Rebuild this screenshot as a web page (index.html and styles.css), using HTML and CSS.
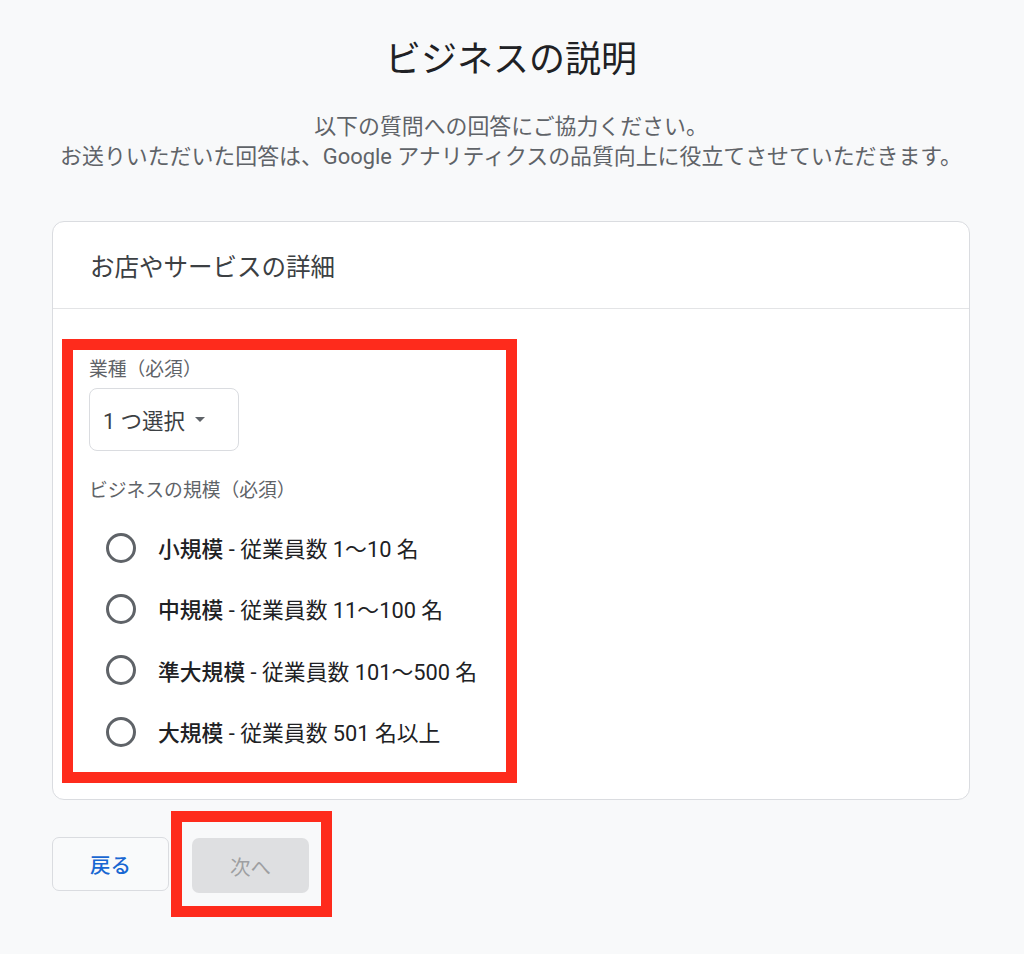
FILE: index.html
```html
<!DOCTYPE html>
<html lang="ja">
<head>
<meta charset="utf-8">
<title>ビジネスの説明</title>
<link rel="stylesheet" href="styles.css">
</head>
<body>
<main class="page">
  <h1 class="title">ビジネスの説明</h1>
  <p class="subtitle">以下の質問への回答にご協力ください。<br>お送りいただいた回答は、Google アナリティクスの品質向上に役立てさせていただきます。</p>

  <section class="card">
    <div class="card-header">お店やサービスの詳細</div>
    <div class="card-body">
      <div class="highlight">
        <div class="field-label">業種（必須）</div>
        <div class="select">1 つ選択<span class="caret"></span></div>
        <div class="field-label second">ビジネスの規模（必須）</div>
        <ul class="radios">
          <li class="radio-row"><span class="radio"></span><span class="radio-text"><span class="em">小規模</span> - 従業員数 1〜10 名</span></li>
          <li class="radio-row"><span class="radio"></span><span class="radio-text"><span class="em">中規模</span> - 従業員数 11〜100 名</span></li>
          <li class="radio-row"><span class="radio"></span><span class="radio-text"><span class="em">準大規模</span> - 従業員数 101〜500 名</span></li>
          <li class="radio-row"><span class="radio"></span><span class="radio-text"><span class="em">大規模</span> - 従業員数 501 名以上</span></li>
        </ul>
      </div>
    </div>
  </section>

  <div class="actions">
    <button class="btn back">戻る</button>
    <div class="highlight-btn">
      <button class="btn next" disabled>次へ</button>
    </div>
  </div>
</main>
</body>
</html>
```

FILE: styles.css
```css
html, body {
  margin: 0;
  padding: 0;
}
body {
  background: #f8f9fa;
  font-family: Roboto, "Noto Sans CJK JP", "Noto Sans", sans-serif;
  color: #202124;
}
.page {
  width: 918px;
  margin-left: 52px;
  padding-top: 38px;
}
.title {
  margin: 0;
  font-size: 36px;
  line-height: 44px;
  font-weight: 400;
  text-align: center;
  color: #202124;
}
.subtitle {
  margin: 30px 0 0;
  font-size: 21.9px;
  line-height: 30px;
  text-align: center;
  color: #5f6368;
}
.card {
  margin-top: 49px;
  background: #fff;
  border: 1px solid #dadce0;
  border-radius: 12px;
}
.card-header {
  height: 87px;
  box-sizing: border-box;
  padding-left: 37px;
  display: flex;
  align-items: center;
  font-size: 24.5px;
  color: #3c4043;
  border-bottom: 1px solid #e3e4e6;
}
.card-body {
  padding: 30px 0 16px 9px;
}
.highlight {
  width: 455px;
  box-sizing: border-box;
  border: 11px solid #fe2b1c;
  padding: 8px 0 10px 16px;
}
.field-label {
  font-size: 18.8px;
  line-height: 24px;
  color: #5f6368;
}
.field-label.second {
  margin-top: 28px;
}
.select {
  margin-top: 6px;
  width: 150px;
  height: 63px;
  box-sizing: border-box;
  border: 1px solid #dadce0;
  border-radius: 8px;
  padding-left: 13px;
  display: flex;
  align-items: center;
  font-size: 21.5px;
  color: #3c4043;
}
.caret {
  margin-left: 10px;
  width: 0;
  height: 0;
  border-left: 5px solid transparent;
  border-right: 5px solid transparent;
  border-top: 5px solid #5f6368;
}
.radios {
  list-style: none;
  margin: 14px 0 0;
  padding: 0;
}
.radio-row {
  height: 61.3px;
  display: flex;
  align-items: center;
  padding-left: 17px;
}
.radio {
  width: 30px;
  height: 30px;
  box-sizing: border-box;
  border: 3px solid #5f6368;
  border-radius: 50%;
  flex: none;
}
.radio-text {
  margin-left: 22px;
  font-size: 21.8px;
  color: #202124;
}
.em {
  font-weight: 500;
}
.actions {
  margin-top: 11px;
  display: flex;
  align-items: center;
  gap: 2px;
}
.btn {
  font-family: Roboto, "Noto Sans CJK JP", "Noto Sans", sans-serif;
  font-size: 20.5px;
  width: 117px;
  height: 54px;
  border-radius: 7px;
  padding: 0;
}
.back {
  background: #f9fafb;
  border: 1px solid #dadce0;
  color: #1967d2;
  font-weight: 500;
}
.highlight-btn {
  border: 11px solid #fe2b1c;
  padding: 16px 12px 13px 10px;
}
.next {
  display: block;
  background: #dedfe1;
  border: none;
  color: #9e9fa2;
  height: 55px;
}
```
